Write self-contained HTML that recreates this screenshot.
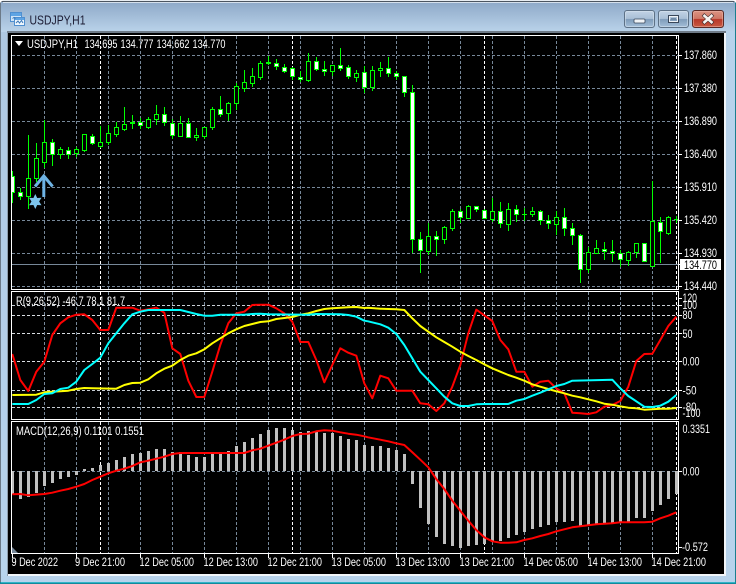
<!DOCTYPE html>
<html>
<head>
<meta charset="utf-8">
<title>USDJPY,H1</title>
<style>
html,body{margin:0;padding:0;background:#b7d3ec;width:736px;height:584px;overflow:hidden}
svg{display:block}
text{font-family:"Liberation Sans",sans-serif;font-size:11.5px;fill:#fff}
.t{font-size:13px;fill:#1b1b33}
</style>
</head>
<body>
<svg id="s" xmlns="http://www.w3.org/2000/svg" width="736" height="584" viewBox="0 0 736 584">
<defs>
<linearGradient id="tb" x1="0" y1="0" x2="0" y2="1"><stop offset="0" stop-color="#8ea9c8"/><stop offset="1" stop-color="#bad3ea"/></linearGradient>
<linearGradient id="sd" x1="0" y1="0" x2="0" y2="1"><stop offset="0" stop-color="#aec8e2"/><stop offset="1" stop-color="#b8d4ed"/></linearGradient>
<linearGradient id="bb" x1="0" y1="0" x2="0" y2="1"><stop offset="0" stop-color="#c3d4e6"/><stop offset=".48" stop-color="#a9bfd6"/><stop offset=".52" stop-color="#7f9cba"/><stop offset="1" stop-color="#a5c0da"/></linearGradient>
<linearGradient id="bc" x1="0" y1="0" x2="0" y2="1"><stop offset="0" stop-color="#dc9484"/><stop offset=".48" stop-color="#cf7765"/><stop offset=".52" stop-color="#b8382a"/><stop offset="1" stop-color="#c95a42"/></linearGradient>
<clipPath id="c1"><rect x="12" y="36" width="666" height="253"/></clipPath>
<clipPath id="c2"><rect x="12" y="292" width="666" height="127"/></clipPath>
<clipPath id="c3"><rect x="12" y="422" width="666" height="131"/></clipPath>
</defs>

<!-- window frame -->
<rect width="736" height="584" fill="#b7d3ec"/>
<rect x="1" y="2" width="734" height="30" fill="url(#tb)"/>
<rect x="1" y="32" width="7" height="544" fill="url(#sd)"/>
<rect x="0" y="1" width="736" height="1" fill="#4c5560"/>
<rect x="0" y="0" width="736" height="1" fill="#e8edf2"/>
<rect x="3" y="2" width="730" height="1" fill="#d5e0ec"/>
<rect x="0" y="2" width="1" height="581" fill="#6c7a88"/>
<rect x="735" y="2" width="1" height="581" fill="#1b7f8f"/>
<path d="M0 0h3L0 3z" fill="#fff"/><path d="M736 0h-3l3 3z" fill="#fff"/>
<rect x="0" y="582" width="736" height="2" fill="#118a9c"/>
<rect x="1" y="582" width="734" height="1" fill="#31b4c7"/>
<rect x="7" y="31" width="719" height="2" fill="#6f7b88"/>
<rect x="7" y="33" width="1" height="543" fill="#8d9cab"/>
<rect x="8" y="574" width="718" height="2" fill="#f2f6fa"/>
<rect x="724" y="33" width="2" height="543" fill="#f2f6fa"/>
<rect x="8" y="33" width="716" height="541" fill="#000"/>

<!-- title icon -->
<g shape-rendering="crispEdges">
<rect x="10.500" y="12.500" width="11" height="9" fill="#cfe4f7" stroke="#4f8fd0"/>
<rect x="11" y="13" width="10" height="3" fill="#5ea4e4"/>
<rect x="14.500" y="17.500" width="10" height="8" fill="#eef6fd" stroke="#4f8fd0"/>
<rect x="15" y="18" width="9" height="2" fill="#5ea4e4"/>
</g>
<path d="M16 23l2-2 1.500 2 2-2.500 1.500 2.500" fill="none" stroke="#3a78b8" stroke-width="1"/>
<path d="M12.500 18.500l1.500-1 1.500 1" fill="none" stroke="#3a78b8" stroke-width="1"/>
<text class="t" x="29.500" y="24.500" textLength="56" lengthAdjust="spacingAndGlyphs">USDJPY,H1</text>

<!-- caption buttons -->
<rect x="624.500" y="10.500" width="30" height="17" rx="2.500" fill="url(#bb)" stroke="#5d7186"/>
<rect x="625.500" y="11.500" width="28" height="15" rx="2" fill="none" stroke="#d8e4ef" stroke-opacity=".55"/>
<rect x="634" y="19" width="11" height="4" rx="1" fill="#f0f3f6" stroke="#39475a" stroke-width=".8"/>
<rect x="658.500" y="10.500" width="30" height="17" rx="2.500" fill="url(#bb)" stroke="#5d7186"/>
<rect x="659.500" y="11.500" width="28" height="15" rx="2" fill="none" stroke="#d8e4ef" stroke-opacity=".55"/>
<rect x="668.500" y="15.500" width="10" height="7" fill="none" stroke="#39475a" stroke-width="1"/>
<rect x="669.500" y="16.500" width="8" height="5" fill="none" stroke="#eef2f6" stroke-width="1"/>
<rect x="671" y="18" width="5" height="2" fill="#6f8aa6"/>
<rect x="692.500" y="10.500" width="31" height="17" rx="2.500" fill="url(#bc)" stroke="#5a2a26"/>
<rect x="693.500" y="11.500" width="29" height="15" rx="2" fill="none" stroke="#eeb9ac" stroke-opacity=".5"/>
<path d="M703 14.500l10 9M713 14.500l-10 9" fill="none" stroke="#3d2a2a" stroke-width="3.800"/>
<path d="M703.500 15l9 8M712.500 15l-9 8" fill="none" stroke="#f6f3f1" stroke-width="2.600"/>

<g id="grid" shape-rendering="crispEdges"></g>
<g id="bars" clip-path="url(#c3)" shape-rendering="crispEdges"></g>
<g id="candles" clip-path="url(#c1)" shape-rendering="crispEdges"></g>

<!-- signal arrow and star -->
<path d="M43.800 197V177" fill="none" stroke="#6eb3e4" stroke-width="3"/>
<path d="M35 186.500l8.800-10.500 8.800 10.500" fill="none" stroke="#6eb3e4" stroke-width="3"/>
<path d="M35.300 194l1.900 4 4.300-.3-2.400 3.800 2.400 3.800-4.300-.3-1.900 4-1.900-4-4.300.3 2.400-3.800-2.400-3.800 4.300.3z" fill="#7cc4ec"/>

<g id="lines"></g>
<g id="frames" shape-rendering="crispEdges"></g>
<path d="M12 547l6 6h-6z" fill="#778899"/>
<path d="M15 41h8l-4 5z" fill="#fff"/>

<!-- chart headers -->
<text x="27" y="48" textLength="51" lengthAdjust="spacingAndGlyphs">USDJPY,H1</text>
<text x="84.500" y="48" textLength="33" lengthAdjust="spacingAndGlyphs">134.695</text>
<text x="120.500" y="48" textLength="33" lengthAdjust="spacingAndGlyphs">134.777</text>
<text x="156.500" y="48" textLength="33" lengthAdjust="spacingAndGlyphs">134.662</text>
<text x="192.500" y="48" textLength="33" lengthAdjust="spacingAndGlyphs">134.770</text>
<text x="16" y="305" textLength="109" lengthAdjust="spacingAndGlyphs">R(9,26,52) -46.7 78.1 81.7</text>
<text x="16" y="435" textLength="128" lengthAdjust="spacingAndGlyphs">MACD(12,26,9) 0.1101 0.1551</text>

<!-- price axis -->
<text x="684" y="59" textLength="33" lengthAdjust="spacingAndGlyphs">137.860</text>
<text x="684" y="92" textLength="33" lengthAdjust="spacingAndGlyphs">137.380</text>
<text x="684" y="125" textLength="33" lengthAdjust="spacingAndGlyphs">136.890</text>
<text x="684" y="158" textLength="33" lengthAdjust="spacingAndGlyphs">136.400</text>
<text x="684" y="191" textLength="33" lengthAdjust="spacingAndGlyphs">135.910</text>
<text x="684" y="224" textLength="33" lengthAdjust="spacingAndGlyphs">135.420</text>
<text x="684" y="257" textLength="33" lengthAdjust="spacingAndGlyphs">134.930</text>
<rect x="680" y="259" width="41" height="11" fill="#fff"/>
<text x="684" y="269" textLength="33" lengthAdjust="spacingAndGlyphs" style="fill:#000">134.770</text>
<text x="684" y="290" textLength="33" lengthAdjust="spacingAndGlyphs">134.440</text>

<!-- indicator axis -->
<text x="682.500" y="302" textLength="14.500" lengthAdjust="spacingAndGlyphs">120</text>
<text x="682.500" y="309" textLength="14.500" lengthAdjust="spacingAndGlyphs">100</text>
<text x="682.500" y="319" textLength="10" lengthAdjust="spacingAndGlyphs">80</text>
<text x="682.500" y="338" textLength="10" lengthAdjust="spacingAndGlyphs">50</text>
<text x="682.500" y="365.500" textLength="17" lengthAdjust="spacingAndGlyphs">0.00</text>
<text x="682.500" y="394.500" textLength="14" lengthAdjust="spacingAndGlyphs">-50</text>
<text x="682.500" y="411" textLength="14" lengthAdjust="spacingAndGlyphs">-80</text>
<text x="682.500" y="417" textLength="18" lengthAdjust="spacingAndGlyphs">-100</text>

<!-- macd axis -->
<text x="682.500" y="433" textLength="27.500" lengthAdjust="spacingAndGlyphs">0.3351</text>
<text x="682.500" y="475.500" textLength="17" lengthAdjust="spacingAndGlyphs">0.00</text>
<text x="682" y="551" textLength="26" lengthAdjust="spacingAndGlyphs">-0.572</text>

<!-- time axis -->
<text x="11.500" y="566" textLength="46.500" lengthAdjust="spacingAndGlyphs">9 Dec 2022</text>
<text x="75" y="566" textLength="50" lengthAdjust="spacingAndGlyphs">9 Dec 21:00</text>
<text x="139.500" y="566" textLength="54.500" lengthAdjust="spacingAndGlyphs">12 Dec 05:00</text>
<text x="203.500" y="566" textLength="54.500" lengthAdjust="spacingAndGlyphs">12 Dec 13:00</text>
<text x="267.500" y="566" textLength="54.500" lengthAdjust="spacingAndGlyphs">12 Dec 21:00</text>
<text x="331.500" y="566" textLength="54.500" lengthAdjust="spacingAndGlyphs">13 Dec 05:00</text>
<text x="395.500" y="566" textLength="54.500" lengthAdjust="spacingAndGlyphs">13 Dec 13:00</text>
<text x="459.500" y="566" textLength="54.500" lengthAdjust="spacingAndGlyphs">13 Dec 21:00</text>
<text x="523.500" y="566" textLength="54.500" lengthAdjust="spacingAndGlyphs">14 Dec 05:00</text>
<text x="587.500" y="566" textLength="54.500" lengthAdjust="spacingAndGlyphs">14 Dec 13:00</text>
<text x="651.500" y="566" textLength="54.500" lengthAdjust="spacingAndGlyphs">14 Dec 21:00</text>
</svg>

<script>
(function(){
var NS="http://www.w3.org/2000/svg";
function el(p,n,a){var e=document.createElementNS(NS,n);for(var k in a)e.setAttribute(k,a[k]);document.getElementById(p).appendChild(e);return e;}
function rect(p,x,y,w,h,f,st){var a={x:x,y:y,width:w,height:h,fill:f};if(st){a.stroke=st;a["stroke-width"]=1;}return el(p,"rect",a);}
var GR="#778899";
function hl(p,y,c,d){el(p,"line",{x1:12,x2:678,y1:y+.5,y2:y+.5,stroke:c,"stroke-dasharray":d||"3 2"});}
function vl(p,x,y1,y2,c){el(p,"line",{x1:x+.5,x2:x+.5,y1:y1,y2:y2,stroke:c,"stroke-dasharray":"3 2"});}
var panels=[[36,289],[292,419],[422,553]];
[55,88,121,154,187,220,253,286].forEach(function(y){hl("grid",y,GR);});
[305,315,333,361,390,407].forEach(function(y){hl("grid",y,y==361||y==315||y==333?"#d8dde2":"#c8ced4");});
hl("grid",471,GR);
panels.forEach(function(p){
  for(var x=44;x<=652;x+=32)vl("grid",x,p[0],p[1],GR);
  [100,292,484,676].forEach(function(x){vl("grid",x,p[0],p[1],"#fff");});
});
el("grid","line",{x1:12,x2:678,y1:264.5,y2:264.5,stroke:GR});

/* candles: [high,low,top,bottom,filled] */
var C=[[171,203,176,192,1],[188,200,192,196,1],[135,209,178,196,0],[143,182,158,178,0],[120,168,142,162,0],[139,166,142,154,1],[147,159,149,154,0],[147,159,150,154,1],[147,157,149,153,0],[134,152,134,150,0],[134,145,136,143,1],[126,148,142,146,0],[125,145,133,142,0],[122,137,127,134,0],[107,131,124,129,0],[115,129,122,123,0],[118,129,122,125,1],[117,129,119,127,0],[105,125,114,119,0],[107,126,114,122,1],[119,139,123,135,1],[116,137,123,136,0],[118,138,123,137,1],[128,141,135,137,0],[127,139,127,136,0],[107,130,109,127,0],[96,117,109,114,1],[102,121,103,113,0],[83,110,86,103,0],[70,92,82,88,0],[68,87,76,83,0],[61,80,63,77,0],[56,65,62,63,0],[59,70,63,66,1],[64,73,67,71,1],[67,80,68,76,1],[71,82,77,79,1],[53,82,61,80,0],[57,71,61,69,1],[61,76,69,71,1],[65,76,65,71,0],[48,71,65,68,1],[65,79,67,76,1],[70,82,73,77,0],[66,93,72,87,1],[66,91,70,87,0],[62,77,68,70,0],[57,77,68,73,1],[71,80,73,76,1],[76,97,76,92,1],[85,253,92,239,1],[232,273,239,250,1],[223,255,236,251,0],[231,256,236,239,1],[226,244,227,239,0],[209,231,211,228,0],[209,223,211,217,1],[205,219,206,218,0],[206,212,206,209,1],[209,219,210,218,1],[198,222,211,219,0],[202,228,211,223,1],[203,231,209,224,0],[205,222,209,214,1],[208,221,214,214,0],[207,217,211,214,0],[210,225,211,220,1],[215,229,220,223,1],[211,235,217,224,0],[208,236,217,228,1],[223,245,228,235,1],[234,283,235,269,1],[247,273,252,269,0],[240,254,248,253,0],[242,260,249,251,1],[240,262,251,253,1],[250,267,253,259,1],[251,266,252,260,0],[243,258,243,252,0],[243,261,243,261,1],[181,266,221,266,0],[217,263,222,231,1],[216,235,217,233,0],[216,223,219,219,0]];
C.forEach(function(c,i){
  var x=12+8*i,G="#00ff00";
  rect("candles",x,c[0],1,c[1]-c[0],G);
  if(c[3]-c[2]<=1){rect("candles",x-2,c[2],5,Math.max(1,c[3]-c[2]+1),G);return;}
  rect("candles",x-1.5,c[2]+.5,4,c[3]-c[2],c[4]?"#fff":"#000",G);
});

/* MACD histogram */
var H=[494,499,497,493,486,483,479,477,475,469,468,465,463,460,457,454,453,451,449,449,452,452,455,457,457,454,454,451,446,442,438,434,430,428,428,430,432,431,431,433,433,436,439,440,445,446,446,448,450,454,484,508,524,537,544,546,548,546,545,544,542,541,538,535,532,529,527,525,522,522,521,526,526,524,524,523,522,522,518,518,511,505,499,494];
H.forEach(function(v,i){
  var x=11+8*i,t=Math.min(v,471),b=Math.max(v,471);
  rect("bars",x,t,3,b-t,"#c0c0c0");
});

function poly(gid,clip,col,pts){
  el("lines","polyline",{points:pts.map(function(p){return p[0].toFixed(1)+","+p[1].toFixed(1);}).join(" "),fill:"none",stroke:col,"stroke-width":2,"stroke-linejoin":"round","clip-path":"url(#"+clip+")"});
}
function z(a,ox,oy){var o=[];for(var i=0;i<a.length;i+=2)o.push([ox+a[i]/3,oy+a[i+1]/3]);return o;}

var rsiY1=z([37,192,61,270,85,303,109,245,133,215,157,135,181,100,205,82,229,74,253,73,277,90,301,120,325,120,349,53,373,53,397,53,421,62,445,58,469,53,493,68,517,175,541,192,565,272,589,321,613,321,637,245,661,165,685,100,709,70,733,65,757,45,781,44,805,44,829,55,853,70,877,95,901,156,925,156,949,210,973,277,997,225,1021,175,1045,188,1069,197,1093,280],0,290)
.concat(z([13,325,37,257,61,265,85,302,109,302,133,302,157,340,181,343,205,363,229,340,253,290,277,225,301,130,325,59,349,76,373,93,397,150,421,178,445,245,469,245,493,290,517,275,541,272,565,295,589,310,613,368,637,370,661,372,685,367,709,350,733,345,757,333,781,290,805,213,829,192,853,191,877,150,901,108,925,80],368,290));
poly("lines","c2","#ff0000",rsiY1);

var yel=z([37,315,109,314,133,307,205,302,229,297,253,294,277,295,349,296,373,285,397,279,421,278,445,268,469,250,493,236,517,227,541,210,565,197,589,190,613,178,637,160,661,145,685,130,709,118,733,108,757,102,781,96,805,94,829,87,877,81,901,74,925,70,949,63,973,57,997,55,1045,52,1069,51,1093,54],0,290)
.concat(z([0,53,37,56,85,58,109,60,133,85,157,108,181,125,205,142,229,156,253,170,277,185,301,198,325,210,349,223,373,235,397,245,421,255,445,263,469,272,493,283,517,290,541,297,565,304,589,310,613,317,637,322,661,328,685,334,709,341,733,344,757,349,781,353,805,355,829,359,853,358,877,356,901,356,925,354],368,290));
poly("lines","c2","#ffff00",yel);

var cy=z([37,342,85,342,109,330,133,312,157,310,181,297,205,293,229,275,253,240,277,222,301,203,325,160,349,130,373,100,397,73,421,65,445,60,469,60,541,60,565,66,589,72,613,77,637,77,661,74,733,74,757,72,781,71,805,73,925,74,949,72,1021,73,1045,75,1069,80,1093,92],0,290)
.concat(z([0,94,37,103,61,113,85,132,109,165,133,205,157,245,181,270,205,295,229,320,253,340,277,348,301,348,325,343,349,342,421,342,445,332,469,327,493,317,517,308,541,298,565,288,589,282,613,272,733,269,757,295,781,318,805,334,829,350,853,351,877,347,901,335,925,315],368,290));
poly("lines","c2","#00ffff",cy);

var sig=z([37,181,61,180,85,184,133,180,157,176,181,170,205,165,229,158,253,150,277,138,301,128,325,118,349,110,373,104,397,96,421,85,445,80,469,74,493,68,517,60,541,57,733,57,757,49,781,44,805,35,829,26,853,17,877,6,901,0,925,-1,949,-8,973,-11,997,-10,1021,-5,1045,-1,1069,2,1093,7],0,434)
.concat(z([0,10,37,17,61,22,85,28,109,33,133,55,157,77,181,100,205,135,229,165,253,200,277,230,301,260,325,288,349,310,373,322,397,326,421,326,445,325,469,318,493,313,517,306,541,300,565,292,589,286,613,280,637,277,661,274,685,271,709,269,733,268,757,265,829,265,853,263,877,253,901,245,925,235],368,434));
poly("lines","c3","#ff0000",sig);

/* frames */
[[11,35,667,254],[11,291,667,128],[11,421,667,132]].forEach(function(r){
  rect("frames",r[0]+.5,r[1]+.5,r[2],r[3],"none","#fff");
});
[55,88,121,154,187,220,253,286,264,305,315,333,361,390,407,471,547,298].forEach(function(y){rect("frames",679,y,3,1,"#fff");});
for(var x=12;x<=652;x+=64)rect("frames",x,554,1,4,"#fff");
})();
</script>
</body>
</html>
